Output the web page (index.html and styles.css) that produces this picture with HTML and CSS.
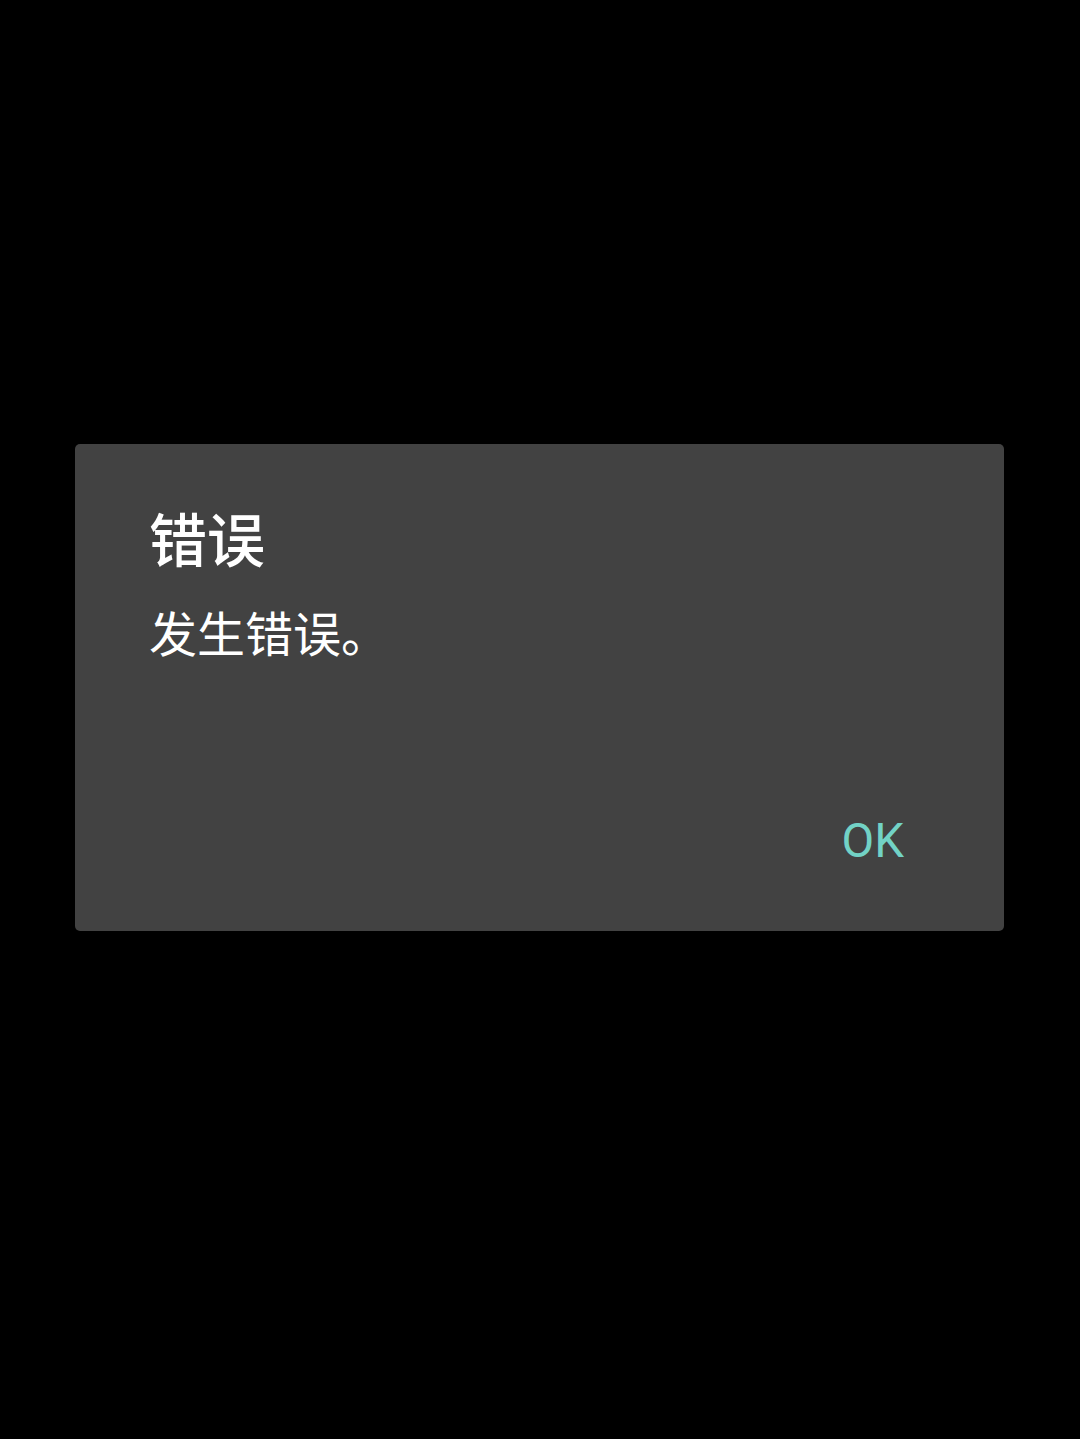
FILE: index.html
```html
<!DOCTYPE html>
<html lang="zh-CN">
<head>
<meta charset="utf-8">
<link rel="stylesheet" href="styles.css">
</head>
<body>
<div class="screen">
  <div class="dialog">
    <div class="title">错误</div>
    <div class="message">发生错误。</div>
    <div class="actions">
      <span class="btn">OK</span>
    </div>
  </div>
</div>
</body>
</html>
```
FILE: styles.css
```css
html, body {
  margin: 0;
  padding: 0;
  background: #000;
  height: 100%;
}
.screen {
  width: 1080px;
  height: 1439px;
  background: #000;
  padding-top: 444px;
  box-sizing: border-box;
}
.dialog {
  margin-left: 75px;
  width: 929px;
  height: 487px;
  background: #424242;
  border-radius: 5px;
  box-sizing: border-box;
  padding: 58px 74px 0 74px;
  display: flex;
  flex-direction: column;
  font-family: Roboto, "Noto Sans CJK SC", sans-serif;
}
.title {
  color: #fff;
  font-size: 58px;
  font-weight: 500;
  line-height: 80px;
}
.message {
  color: #fff;
  font-size: 48px;
  line-height: 64px;
  margin-top: 22px;
}
.actions {
  display: flex;
  justify-content: flex-end;
  margin-top: 143px;
  padding-right: 26px;
}
.btn {
  color: #72d2c6;
  font-size: 47.5px;
  line-height: 60px;
}
```
